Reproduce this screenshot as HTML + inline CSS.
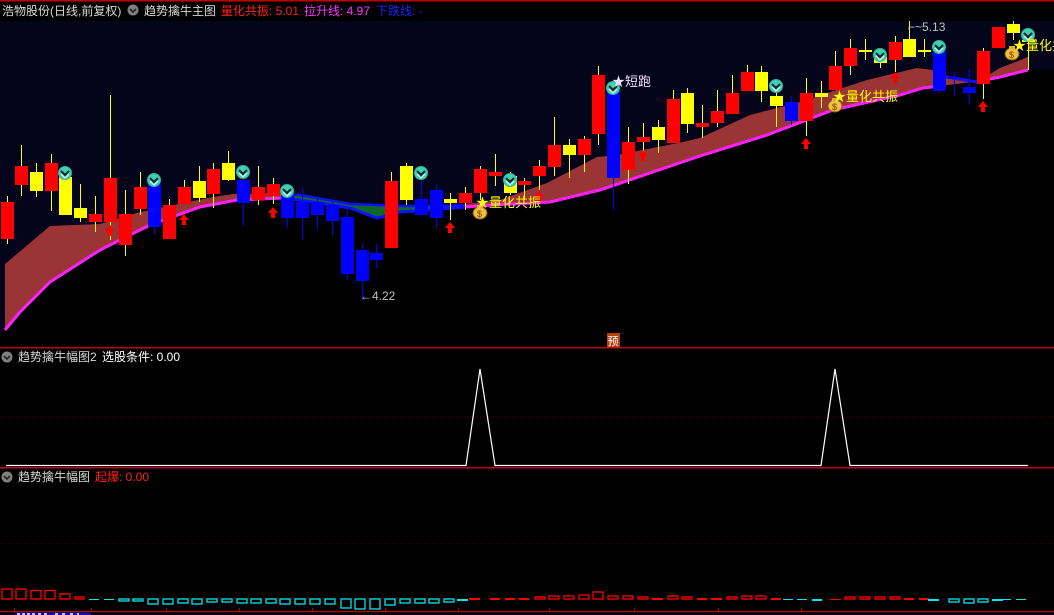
<!DOCTYPE html>
<html><head><meta charset="utf-8"><style>
html,body{margin:0;padding:0;background:#000;width:1054px;height:615px;overflow:hidden}
svg{display:block}
text{font-family:"Liberation Sans","Noto Sans CJK SC",sans-serif;font-size:12px}
</style></head><body>
<svg width="1054" height="615" viewBox="0 0 1054 615" xmlns="http://www.w3.org/2000/svg">
<rect width="1054" height="615" fill="#000"/>
<rect x="0" y="0" width="1054" height="1.5" fill="#c00000"/>
<rect x="0" y="21" width="1054" height="326" fill="#04041a"/>
<!-- black below line -->
<polygon fill="#000" points="0,347 0,333 5,330 20,312 50,282 100,250 150,225 200,207 237,200 283,198 320,203 350,208 377,218 400,212 430,210 466,207 493,205 550,202 600,190 650,173 700,156 767,135 833,110 900,95 923,88 973,82 1000,77 1028,70 1054,70 1054,347"/>
<!-- band -->
<polygon fill="#9b3535" points="5,264 50,226 100,224 140,212 213,197 233,194 277,193 300,195 350,204 400,206 440,206 475,203 500,200 547,183 597,157 617,155 683,142 700,138 750,115 800,102 867,80 917,68 933,70 947,77 977,82 1000,68 1028,57 1028,70 1000,77 973,82 923,88 900,95 833,110 767,135 700,156 650,173 600,190 550,202 493,205 466,207 430,210 400,212 377,218 350,208 320,203 283,198 237,200 200,207 150,225 100,250 50,282 20,312 5,330"/>
<polygon fill="#0b6a2a" points="283,195 300,195 350,204 400,206 440,206 466,205 466,207 430,210 400,212 377,218 350,208 320,203 283,198"/>
<polyline fill="none" stroke="#ff20ff" stroke-width="3" points="5,330 20,312 50,282 100,250 150,225 200,207 237,200 283,198"/>
<polyline fill="none" stroke="#ff20ff" stroke-width="3" points="466,207 493,205 550,202 600,190 650,173 700,156 767,135 833,110 900,95 923,88 940,86"/>
<polyline fill="none" stroke="#ff20ff" stroke-width="3" points="980,81 1000,77 1028,70"/>
<polyline fill="none" stroke="#1010ff" stroke-width="3" points="283,198 320,203 350,208 377,218 400,212 430,210 466,207"/>
<polyline fill="none" stroke="#1010ff" stroke-width="2.5" points="283,195 300,195 350,204 400,206 440,206 466,205"/>
<polyline fill="none" stroke="#1010ff" stroke-width="3" points="940,77 947,77 977,82"/>
<g id="c"></g>
<!-- candles -->
<g stroke-width="1">
<line x1="7.5" y1="196" x2="7.5" y2="244" stroke="#ff0"/><rect x="1" y="202" width="13" height="37" fill="#f00"/>
<line x1="21.5" y1="145" x2="21.5" y2="196" stroke="#ff0"/><rect x="15" y="166" width="13" height="19" fill="#f00"/>
<line x1="36.5" y1="163" x2="36.5" y2="197" stroke="#ff0"/><rect x="30" y="172" width="13" height="19" fill="#ff0"/>
<line x1="51.5" y1="154" x2="51.5" y2="211" stroke="#ff0"/><rect x="45" y="163" width="13" height="28" fill="#f00"/>
<line x1="65.5" y1="166" x2="65.5" y2="215" stroke="#ff0"/><rect x="59" y="177" width="13" height="38" fill="#ff0"/>
<line x1="80.5" y1="184" x2="80.5" y2="222" stroke="#ff0"/><rect x="74" y="208" width="13" height="10" fill="#ff0"/>
<line x1="95.5" y1="196" x2="95.5" y2="232" stroke="#ff0"/><rect x="89" y="214" width="13" height="8" fill="#f00"/>
<line x1="110.5" y1="95" x2="110.5" y2="240" stroke="#ff0"/><rect x="104" y="178" width="13" height="44" fill="#f00"/>
<line x1="125.5" y1="190" x2="125.5" y2="256" stroke="#ff0"/><rect x="119" y="214" width="13" height="31" fill="#f00"/>
<line x1="140.5" y1="172" x2="140.5" y2="215" stroke="#ff0"/><rect x="134" y="187" width="13" height="22" fill="#f00"/>
<line x1="154.5" y1="173" x2="154.5" y2="235" stroke="#00f"/><rect x="148" y="183" width="13" height="44" fill="#00f"/>
<line x1="169.5" y1="199" x2="169.5" y2="239" stroke="#ff0"/><rect x="163" y="205" width="13" height="34" fill="#f00"/>
<line x1="184.5" y1="180" x2="184.5" y2="204" stroke="#ff0"/><rect x="178" y="187" width="13" height="17" fill="#f00"/>
<line x1="199.5" y1="166" x2="199.5" y2="202" stroke="#ff0"/><rect x="193" y="181" width="13" height="17" fill="#ff0"/>
<line x1="213.5" y1="163" x2="213.5" y2="208" stroke="#ff0"/><rect x="207" y="169" width="13" height="25" fill="#f00"/>
<line x1="228.5" y1="151" x2="228.5" y2="181" stroke="#ff0"/><rect x="222" y="163" width="13" height="17" fill="#ff0"/>
<line x1="243.5" y1="170" x2="243.5" y2="226" stroke="#00f"/><rect x="237" y="180" width="13" height="23" fill="#00f"/>
<line x1="258.5" y1="166" x2="258.5" y2="205" stroke="#ff0"/><rect x="252" y="187" width="13" height="13" fill="#f00"/>
<line x1="273.5" y1="178" x2="273.5" y2="204" stroke="#ff0"/><rect x="267" y="184" width="13" height="12" fill="#f00"/>
<line x1="287.5" y1="190" x2="287.5" y2="228" stroke="#00f"/><rect x="281" y="195" width="13" height="23" fill="#00f"/>
<line x1="302.5" y1="188" x2="302.5" y2="240" stroke="#00f"/><rect x="296" y="202" width="13" height="16" fill="#00f"/>
<line x1="317.5" y1="198" x2="317.5" y2="230" stroke="#00f"/><rect x="311" y="202" width="13" height="13" fill="#00f"/>
<line x1="332.5" y1="201" x2="332.5" y2="235" stroke="#00f"/><rect x="326" y="205" width="13" height="16" fill="#00f"/>
<line x1="347.5" y1="210" x2="347.5" y2="280" stroke="#00f"/><rect x="341" y="217" width="13" height="57" fill="#00f"/>
<line x1="362.5" y1="244" x2="362.5" y2="300" stroke="#00f"/><rect x="356" y="250" width="13" height="31" fill="#00f"/>
<line x1="376.5" y1="244" x2="376.5" y2="268" stroke="#00f"/><rect x="370" y="253" width="13" height="7" fill="#00f"/>
<line x1="391.5" y1="172" x2="391.5" y2="248" stroke="#ff0"/><rect x="385" y="181" width="13" height="67" fill="#f00"/>
<line x1="406.5" y1="163" x2="406.5" y2="205" stroke="#ff0"/><rect x="400" y="166" width="13" height="34" fill="#ff0"/>
<line x1="421.5" y1="180" x2="421.5" y2="216" stroke="#00f"/><rect x="415" y="199" width="13" height="16" fill="#00f"/>
<line x1="436.5" y1="184" x2="436.5" y2="228" stroke="#00f"/><rect x="430" y="190" width="13" height="28" fill="#00f"/>
<line x1="450.5" y1="193" x2="450.5" y2="220" stroke="#ff0"/><rect x="444" y="199" width="13" height="4" fill="#ff0"/>
<line x1="465.5" y1="187" x2="465.5" y2="210" stroke="#ff0"/><rect x="459" y="193" width="13" height="10" fill="#f00"/>
<line x1="480.5" y1="166" x2="480.5" y2="200" stroke="#ff0"/><rect x="474" y="169" width="13" height="24" fill="#f00"/>
<line x1="495.5" y1="154" x2="495.5" y2="186" stroke="#ff0"/><rect x="489" y="172" width="13" height="4" fill="#f00"/>
<line x1="510.5" y1="172" x2="510.5" y2="195" stroke="#ff0"/><rect x="504" y="176" width="13" height="17" fill="#ff0"/>
<line x1="524.5" y1="178" x2="524.5" y2="200" stroke="#ff0"/><rect x="518" y="181" width="13" height="4" fill="#f00"/>
<line x1="539.5" y1="160" x2="539.5" y2="190" stroke="#ff0"/><rect x="533" y="166" width="13" height="10" fill="#f00"/>
<line x1="554.5" y1="117" x2="554.5" y2="176" stroke="#ff0"/><rect x="548" y="145" width="13" height="22" fill="#f00"/>
<line x1="569.5" y1="139" x2="569.5" y2="178" stroke="#ff0"/><rect x="563" y="145" width="13" height="10" fill="#ff0"/>
<line x1="584.5" y1="136" x2="584.5" y2="172" stroke="#ff0"/><rect x="578" y="139" width="13" height="16" fill="#f00"/>
<line x1="598.5" y1="66" x2="598.5" y2="145" stroke="#ff0"/><rect x="592" y="75" width="13" height="59" fill="#f00"/>
<line x1="613.5" y1="85" x2="613.5" y2="210" stroke="#00f"/><rect x="607" y="91" width="13" height="87" fill="#00f"/>
<line x1="628.5" y1="127" x2="628.5" y2="184" stroke="#ff0"/><rect x="622" y="142" width="13" height="28" fill="#f00"/>
<line x1="643.5" y1="123" x2="643.5" y2="160" stroke="#ff0"/><rect x="637" y="137" width="13" height="5" fill="#f00"/>
<line x1="658.5" y1="120" x2="658.5" y2="153" stroke="#ff0"/><rect x="652" y="127" width="13" height="13" fill="#ff0"/>
<line x1="673.5" y1="90" x2="673.5" y2="143" stroke="#ff0"/><rect x="667" y="99" width="13" height="44" fill="#f00"/>
<line x1="687.5" y1="88" x2="687.5" y2="133" stroke="#ff0"/><rect x="681" y="93" width="13" height="31" fill="#ff0"/>
<line x1="702.5" y1="105" x2="702.5" y2="138" stroke="#ff0"/><rect x="696" y="123" width="13" height="4" fill="#f00"/>
<line x1="717.5" y1="90" x2="717.5" y2="127" stroke="#ff0"/><rect x="711" y="111" width="13" height="12" fill="#f00"/>
<line x1="732.5" y1="75" x2="732.5" y2="114" stroke="#ff0"/><rect x="726" y="93" width="13" height="21" fill="#f00"/>
<line x1="747.5" y1="65" x2="747.5" y2="91" stroke="#ff0"/><rect x="741" y="72" width="13" height="19" fill="#f00"/>
<line x1="761.5" y1="66" x2="761.5" y2="102" stroke="#ff0"/><rect x="755" y="72" width="13" height="19" fill="#ff0"/>
<line x1="776.5" y1="80" x2="776.5" y2="127" stroke="#ff0"/><rect x="770" y="96" width="13" height="10" fill="#ff0"/>
<line x1="791.5" y1="96" x2="791.5" y2="125" stroke="#00f"/><rect x="785" y="102" width="13" height="19" fill="#00f"/>
<line x1="806.5" y1="78" x2="806.5" y2="136" stroke="#ff0"/><rect x="800" y="93" width="13" height="28" fill="#f00"/>
<line x1="821.5" y1="81" x2="821.5" y2="108" stroke="#ff0"/><rect x="815" y="93" width="13" height="4" fill="#ff0"/>
<line x1="835.5" y1="51" x2="835.5" y2="90" stroke="#ff0"/><rect x="829" y="66" width="13" height="24" fill="#f00"/>
<line x1="850.5" y1="39" x2="850.5" y2="75" stroke="#ff0"/><rect x="844" y="48" width="13" height="18" fill="#f00"/>
<line x1="865.5" y1="39" x2="865.5" y2="60" stroke="#ff0"/><rect x="859" y="50" width="13" height="2" fill="#ff0"/>
<line x1="880.5" y1="50" x2="880.5" y2="68" stroke="#ff0"/><rect x="874" y="57" width="13" height="6" fill="#ff0"/>
<line x1="895.5" y1="36" x2="895.5" y2="72" stroke="#ff0"/><rect x="889" y="42" width="13" height="18" fill="#f00"/>
<line x1="909.5" y1="21" x2="909.5" y2="57" stroke="#ff0"/><rect x="903" y="39" width="13" height="18" fill="#ff0"/>
<line x1="924.5" y1="39" x2="924.5" y2="57" stroke="#ff0"/><rect x="918" y="50" width="13" height="2" fill="#ff0"/>
<line x1="939.5" y1="45" x2="939.5" y2="93" stroke="#00f"/><rect x="933" y="51" width="13" height="40" fill="#00f"/>
<line x1="954.5" y1="72" x2="954.5" y2="96" stroke="#00f"/><rect x="948" y="77" width="13" height="2" fill="#00f"/>
<line x1="969.5" y1="69" x2="969.5" y2="105" stroke="#00f"/><rect x="963" y="87" width="13" height="6" fill="#00f"/>
<line x1="983.5" y1="48" x2="983.5" y2="99" stroke="#ff0"/><rect x="977" y="51" width="13" height="33" fill="#f00"/>
<rect x="992" y="27" width="13" height="21" fill="#f00"/>
<line x1="1013.5" y1="21" x2="1013.5" y2="40" stroke="#ff0"/><rect x="1007" y="24" width="13" height="9" fill="#ff0"/>
<line x1="1028.5" y1="35" x2="1028.5" y2="70" stroke="#ff0"/><rect x="1022" y="40" width="13" height="2" fill="#ff0"/>
</g>
<!-- arrows -->
<defs>
<g id="ar"><polygon points="0,-5 -5,1 -2,1 -2,6 2,6 2,1 5,1" fill="#f00"/></g>
<g id="ic"><circle r="7" fill="#2fb49a"/><circle r="6" fill="#3fd2b0"/><path d="M-4,-2 L0,2 L4,-2" stroke="#123" stroke-width="2" fill="none"/><path d="M-4,1 L0,5 L4,1" stroke="#eef" stroke-width="1.2" fill="none"/></g>
<g id="bag"><ellipse cx="0" cy="2" rx="7" ry="6" fill="#f0c040" stroke="#8a5a10" stroke-width="1"/><rect x="-3" y="-6" width="6" height="3" fill="#e0b030"/><text x="-3" y="6" style="font-size:9px" fill="#7a3a00">$</text></g>
<g id="ci"><circle r="5.5" fill="#808080"/><path d="M-3,-1 L0,2 L3,-1" stroke="#222" stroke-width="1.6" fill="none"/></g>
</defs>
<use href="#ar" x="110" y="230"/><use href="#ar" x="184" y="219"/><use href="#ar" x="273" y="212"/>
<use href="#ar" x="450" y="227"/><use href="#ar" x="539" y="196"/><use href="#ar" x="643" y="155"/>
<use href="#ar" x="806" y="143"/><use href="#ar" x="895" y="77"/><use href="#ar" x="983" y="106"/>
<use href="#ic" x="65" y="173"/><use href="#ic" x="154" y="180"/><use href="#ic" x="243" y="172"/>
<use href="#ic" x="287" y="191"/><use href="#ic" x="421" y="173"/><use href="#ic" x="510" y="180"/>
<use href="#ic" x="613" y="88"/><use href="#ic" x="776" y="86"/><use href="#ic" x="880" y="55"/>
<use href="#ic" x="939" y="47"/><use href="#ic" x="1028" y="35"/>
<use href="#bag" x="480" y="211"/><use href="#bag" x="835" y="104"/><use href="#bag" x="1012" y="52"/>
<text x="476" y="207" fill="#ffff00" style="font-size:13px">★量化共振</text>
<text x="833" y="101" fill="#ffff00" style="font-size:13px">★量化共振</text>
<text x="1013" y="50" fill="#ffff00" style="font-size:13px">★量化共</text>
<text x="612" y="86" fill="#f0e0ff" style="font-size:13px">★短跑</text>
<text x="908" y="31" fill="#c0c0c0">⌐~5.13</text>
<text x="360" y="300" fill="#c0c0c0">←4.22</text>
<rect x="607" y="333" width="13" height="14" fill="#b84010"/>
<text x="607.5" y="345" fill="#fff" style="font-size:11px">预</text>
<!-- header -->
<rect x="0" y="2" width="1054" height="19" fill="#000"/>
<text x="2" y="15" fill="#d8d8d8">浩物股份(日线,前复权)</text>
<use href="#ci" x="133" y="10"/>
<text x="144" y="15" fill="#d8d8d8">趋势擒牛主图</text>
<text x="221" y="15" fill="#ff2020">量化共振: 5.01</text>
<text x="304" y="15" fill="#ff30ff">拉升线: 4.97</text>
<text x="376" y="15" fill="#2020ff">下跌线: -</text>
<!-- panel 2 -->
<rect x="0" y="347" width="1054" height="1.5" fill="#c00000"/>
<use href="#ci" x="7" y="357"/>
<text x="18" y="361" fill="#d8d8d8">趋势擒牛幅图2</text>
<text x="102" y="361" fill="#ffffff">选股条件: 0.00</text>
<line x1="0" y1="417.5" x2="1054" y2="417.5" stroke="#700000" stroke-dasharray="1,3"/>
<polyline fill="none" stroke="#fff" stroke-width="1.2" points="6,465.5 466,465.5 480,369 495,465.5 821,465.5 835,369 850,465.5 1028,465.5"/>
<!-- panel 3 -->
<rect x="0" y="467" width="1054" height="1.5" fill="#c00000"/>
<use href="#ci" x="7" y="477"/>
<text x="18" y="481" fill="#d8d8d8">趋势擒牛幅图</text>
<text x="95" y="481" fill="#ff2020">起爆: 0.00</text>
<line x1="0" y1="543.5" x2="1054" y2="543.5" stroke="#500000" stroke-dasharray="1,3"/>
<g fill="none" stroke="#f00" stroke-width="1.3">
<rect x="2" y="589" width="10" height="10"/><rect x="16" y="589" width="10" height="10"/><rect x="31" y="590.5" width="10" height="8.5"/><rect x="45" y="590.5" width="10" height="8.5"/><rect x="60" y="594" width="10" height="5"/><rect x="75" y="597" width="9" height="2"/>
<rect x="535" y="597" width="10" height="2"/><rect x="549" y="596" width="10" height="3"/><rect x="564" y="596" width="10" height="3"/><rect x="579" y="595" width="10" height="4"/><rect x="593" y="592" width="10" height="7"/><rect x="608" y="596" width="10" height="3"/><rect x="623" y="596" width="10" height="3"/><rect x="638" y="597" width="10" height="2"/><rect x="668" y="596" width="10" height="3"/><rect x="682" y="597" width="10" height="2"/><rect x="727" y="597" width="10" height="2"/><rect x="742" y="596" width="10" height="3"/><rect x="756" y="596" width="10" height="3"/>
<rect x="845" y="597" width="10" height="2"/><rect x="860" y="597" width="10" height="2"/><rect x="875" y="597" width="10" height="2"/><rect x="890" y="597" width="10" height="2"/>
</g>
<g fill="#f00">
<rect x="469" y="598" width="11" height="2"/><rect x="490" y="598" width="10" height="2"/><rect x="505" y="598" width="10" height="2"/><rect x="519" y="598" width="10" height="2"/>
<rect x="652" y="598" width="11" height="2"/><rect x="697" y="598" width="10" height="2"/><rect x="711" y="598" width="11" height="2"/><rect x="771" y="598" width="10" height="2"/><rect x="830" y="599" width="11" height="1"/><rect x="904" y="598" width="10" height="2"/><rect x="919" y="598" width="10" height="2"/>
</g>
<g fill="none" stroke="#00e8f0" stroke-width="1.3">
<rect x="119" y="599" width="10" height="2"/><rect x="133" y="599" width="10" height="2"/><rect x="148" y="599" width="10" height="5"/><rect x="163" y="599" width="10" height="5"/><rect x="178" y="599" width="10" height="4"/><rect x="192" y="599" width="10" height="5"/><rect x="207" y="599" width="10" height="3"/><rect x="222" y="599" width="10" height="3"/><rect x="237" y="599" width="10" height="4"/><rect x="251" y="599" width="10" height="4"/><rect x="266" y="599" width="10" height="4"/><rect x="280" y="599" width="10" height="5"/><rect x="295" y="599" width="10" height="5"/><rect x="310" y="599" width="10" height="5"/><rect x="325" y="599" width="10" height="5"/><rect x="341" y="599" width="10" height="9"/><rect x="355" y="599" width="10" height="10"/><rect x="370" y="599" width="10" height="10"/><rect x="385" y="599" width="10" height="6"/><rect x="400" y="599" width="10" height="4"/><rect x="415" y="599" width="10" height="4"/><rect x="429" y="599" width="10" height="4"/><rect x="444" y="599" width="10" height="3"/>
<rect x="949" y="599" width="10" height="3"/><rect x="964" y="599" width="10" height="4"/><rect x="978" y="599" width="10" height="3"/>
</g>
<g fill="#00e8f0">
<rect x="89" y="599" width="10" height="1"/><rect x="104" y="599" width="10" height="1"/><rect x="457" y="599" width="11" height="2"/>
<rect x="783" y="599" width="10" height="1"/><rect x="797" y="599" width="10" height="1"/><rect x="812" y="599" width="10" height="2"/><rect x="928" y="599" width="11" height="2"/><rect x="992" y="599" width="11" height="2"/><rect x="1001" y="599" width="10" height="1"/><rect x="1016" y="599" width="10" height="1"/>
</g>
<rect x="0" y="611" width="1054" height="1.2" fill="#c00000"/>
<g fill="#c00000"><rect x="14" y="608" width="1" height="4"/><rect x="91" y="608" width="1" height="4"/><rect x="166" y="608" width="1" height="4"/><rect x="239" y="608" width="1" height="4"/><rect x="312" y="608" width="1" height="4"/><rect x="385" y="608" width="1" height="4"/><rect x="458" y="608" width="1" height="4"/><rect x="549" y="608" width="1" height="4"/><rect x="634" y="608" width="1" height="4"/><rect x="718" y="608" width="1" height="4"/><rect x="801" y="608" width="1" height="4"/></g>
<rect x="15" y="612.5" width="76" height="3" fill="#1010a0"/>
<g fill="#c0c0ff"><rect x="17" y="613" width="3" height="2"/><rect x="22" y="613" width="3" height="2"/><rect x="27" y="613" width="3" height="2"/><rect x="32" y="613" width="3" height="2"/><rect x="38" y="613" width="3" height="2"/><rect x="44" y="613" width="3" height="2"/><rect x="55" y="613" width="3" height="2"/><rect x="62" y="613" width="3" height="2"/><rect x="70" y="613" width="3" height="2"/><rect x="77" y="613" width="2" height="2"/></g>
</svg>
</body></html>
